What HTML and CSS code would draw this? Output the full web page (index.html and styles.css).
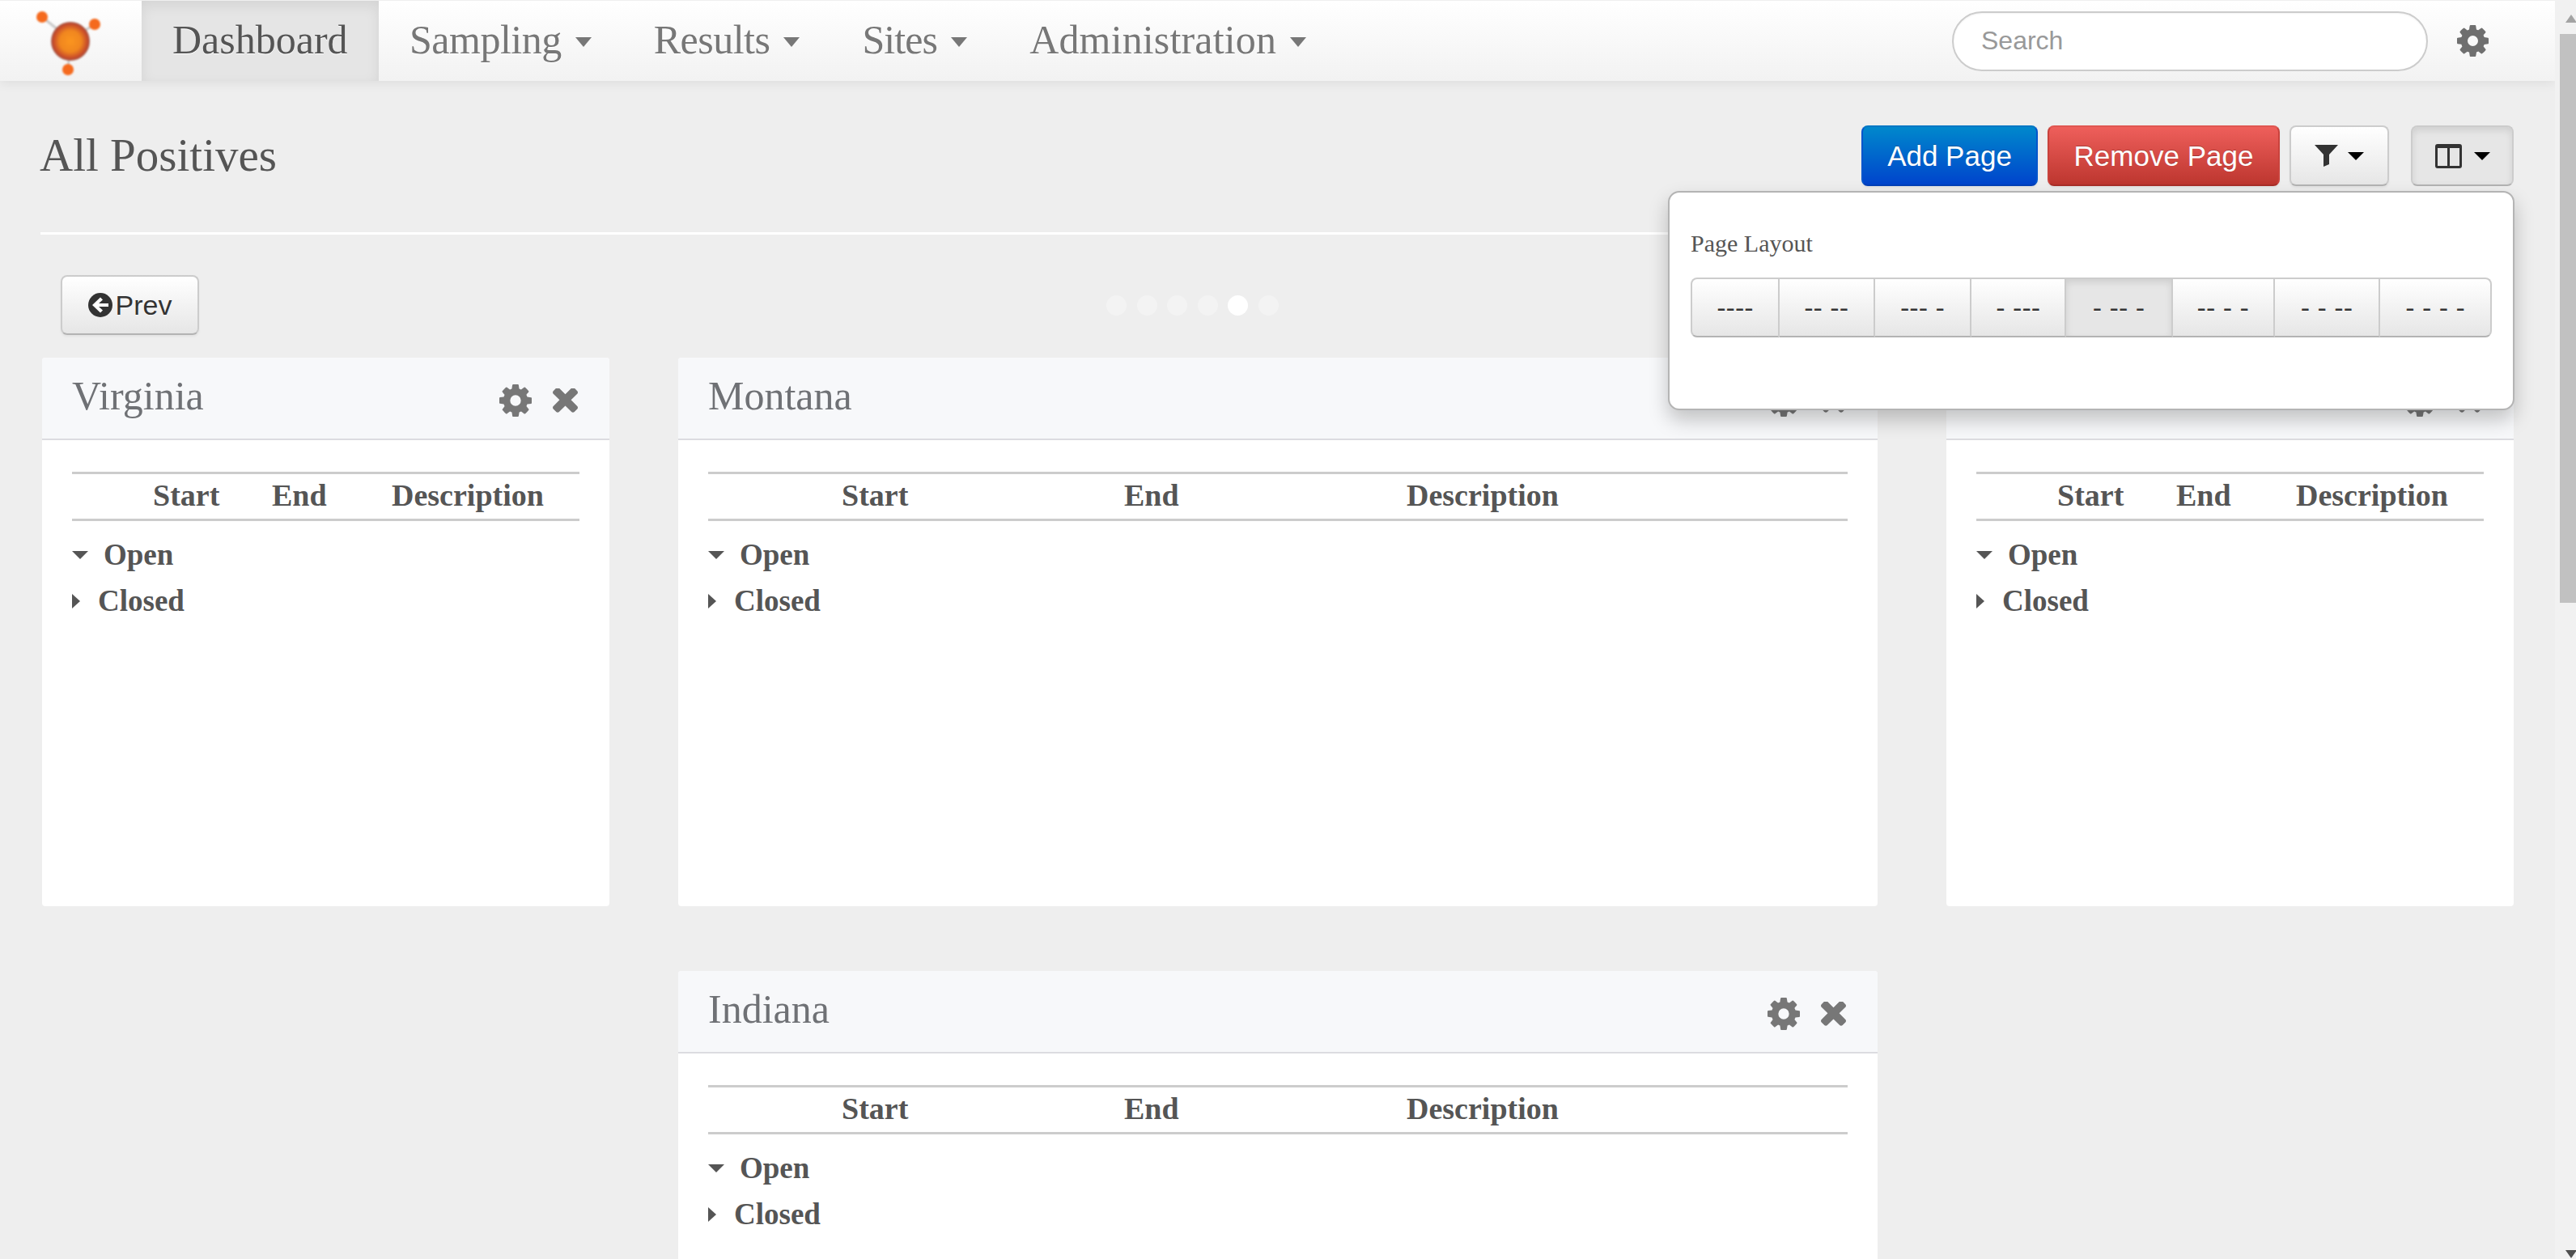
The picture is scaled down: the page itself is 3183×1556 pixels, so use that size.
FILE: index.html
```html
<!DOCTYPE html>
<html lang="en">
<head>
<meta charset="utf-8">
<title>All Positives</title>
<link rel="stylesheet" href="styles.css">
</head>
<body>
<svg class="defs" width="0" height="0" aria-hidden="true">
  <symbol id="gear" viewBox="0 0 1536 1536"><path d="M1024 768q0-106-75-181t-181-75-181 75-75 181 75 181 181 75 181-75 75-181zm512-109v222q0 12-8 23t-20 13l-185 28q-19 54-39 91 35 50 107 138 10 12 10 25t-9 23q-27 37-99 108t-94 71q-12 0-26-9l-138-108q-44 23-91 38-16 136-29 186-7 28-36 28h-222q-14 0-24.5-8.5t-11.5-21.5l-28-184q-49-16-90-37l-141 107q-10 9-25 9-14 0-25-11-126-114-165-168-7-10-7-23 0-12 8-23 15-21 51-66.5t54-70.5q-27-50-41-99l-183-27q-13-2-21-12.5t-8-23.5v-222q0-12 8-23t19-13l186-28q14-46 39-92-40-57-107-138-10-12-10-24 0-10 9-23 26-36 98.5-107.5t94.5-71.5q13 0 26 10l138 107q44-23 91-38 16-136 29-186 7-28 36-28h222q14 0 24.5 8.5t11.5 21.5l28 184q49 16 90 37l142-107q9-9 24-9 13 0 25 10 129 119 165 170 7 8 7 22 0 12-8 23-15 21-51 66.5t-54 70.5q26 50 41 98l183 28q13 2 21 12.5t8 23.5z"/></symbol>
  <symbol id="times" viewBox="110 346 1188 1100"><path d="M1298 1214q0 40-28 68l-136 136q-28 28-68 28t-68-28l-294-294-294 294q-28 28-68 28t-68-28l-136-136q-28-28-28-68t28-68l294-294-294-294q-28-28-28-68t28-68l136-136q28-28 68-28t68 28l294 294 294-294q28-28 68-28t68 28l136 136q28 28 28 68t-28 68l-294 294 294 294q28 28 28 68z"/></symbol>
</svg>
<div class="shell">
  <div class="app">
    <nav class="nav">
      <a class="brand" aria-label="Home">
        <svg width="175" height="98" viewBox="0 0 175 98">
          <defs>
            <radialGradient id="orb"><stop offset="0" stop-color="#fb951f"/><stop offset="0.55" stop-color="#f0861f"/><stop offset="0.88" stop-color="#c6492a"/><stop offset="1" stop-color="#a05a4a"/></radialGradient>
          </defs>
          <path d="M52 20L87 48M117 29L87 48M84 85L87 48" stroke="#c9c9c9" stroke-width="3"/>
          <circle cx="87" cy="50" r="24" fill="url(#orb)"/>
          <circle cx="52" cy="20" r="7" fill="#f56a1e"/>
          <circle cx="117" cy="29" r="7" fill="#f56a1e"/>
          <circle cx="84" cy="85" r="7" fill="#f56a1e"/>
        </svg>
      </a>
      <a class="nav-item is-active">Dashboard</a>
      <a class="nav-item ls-sampling">Sampling<i class="nav-caret"></i></a>
      <a class="nav-item ls-results">Results<i class="nav-caret"></i></a>
      <a class="nav-item ls-sites">Sites<i class="nav-caret"></i></a>
      <a class="nav-item ls-admin">Administration<i class="nav-caret"></i></a>
      <div class="nav-right">
        <input class="search" type="text" placeholder="Search">
        <svg class="nav-gear"><use href="#gear"/></svg>
      </div>
    </nav>

    <main class="content">
      <header class="toolbar">
        <h1 class="page-title">All Positives</h1>
        <div class="actions">
          <button class="btn btn-blue">Add Page</button>
          <button class="btn btn-red">Remove Page</button>
          <button class="btn btn-icon">
            <svg class="ico-filter" viewBox="0 0 29 27"><path d="M0 0H29L18 12V24L11 27V12Z"/></svg>
            <i class="caret"></i>
          </button>
          <button class="btn btn-icon btn-layout is-pressed">
            <svg class="ico-cols" viewBox="0 0 33 30"><path fill-rule="evenodd" d="M3 0H30A3 3 0 0 1 33 3V27A3 3 0 0 1 30 30H3A3 3 0 0 1 0 27V3A3 3 0 0 1 3 0ZM3 5V27H15V5ZM18 5V27H30V5Z"/></svg>
            <i class="caret"></i>
          </button>
          <section class="popover">
            <h2 class="popover-title">Page Layout</h2>
            <div class="btn-group">
              <button class="seg seg-a">----</button>
              <button class="seg seg-b">-- --</button>
              <button class="seg seg-c">--- -</button>
              <button class="seg seg-d">- ---</button>
              <button class="seg seg-e is-pressed">- -- -</button>
              <button class="seg seg-f">-- - -</button>
              <button class="seg seg-g">- - --</button>
              <button class="seg seg-h">- - - -</button>
            </div>
          </section>
        </div>
      </header>
      <hr class="rule">
      <div class="pager">
        <button class="btn btn-prev">
          <svg class="ico-prev" viewBox="0 0 30 30"><circle cx="15" cy="15" r="15"/><path class="ico-prev-arrow" d="M5 15L15 5.500L18 8.500L13 13H25V17H13L18 21.500L15 24.500Z"/></svg>Prev
        </button>
        <div class="dots">
          <span class="dot"></span><span class="dot"></span><span class="dot"></span><span class="dot"></span><span class="dot is-current"></span><span class="dot"></span>
        </div>
      </div>

      <div class="board">
        <article class="panel narrow">
          <div class="panel-head"><h3 class="panel-title">Virginia</h3><span class="tools"><svg class="tool-gear"><use href="#gear"/></svg><svg class="tool-x"><use href="#times"/></svg></span></div>
          <div class="panel-body">
            <div class="cols"><span></span><span>Start</span><span>End</span><span>Description</span></div>
            <div class="group"><i class="tri-down"></i>Open</div>
            <div class="group"><i class="tri-right"></i>Closed</div>
          </div>
        </article>
        <article class="panel wide">
          <div class="panel-head"><h3 class="panel-title">Montana</h3><span class="tools"><svg class="tool-gear"><use href="#gear"/></svg><svg class="tool-x"><use href="#times"/></svg></span></div>
          <div class="panel-body">
            <div class="cols"><span></span><span>Start</span><span>End</span><span>Description</span></div>
            <div class="group"><i class="tri-down"></i>Open</div>
            <div class="group"><i class="tri-right"></i>Closed</div>
          </div>
        </article>
        <article class="panel narrow">
          <div class="panel-head"><h3 class="panel-title"></h3><span class="tools"><svg class="tool-gear"><use href="#gear"/></svg><svg class="tool-x"><use href="#times"/></svg></span></div>
          <div class="panel-body">
            <div class="cols"><span></span><span>Start</span><span>End</span><span>Description</span></div>
            <div class="group"><i class="tri-down"></i>Open</div>
            <div class="group"><i class="tri-right"></i>Closed</div>
          </div>
        </article>
        <article class="panel wide second-row">
          <div class="panel-head"><h3 class="panel-title">Indiana</h3><span class="tools"><svg class="tool-gear"><use href="#gear"/></svg><svg class="tool-x"><use href="#times"/></svg></span></div>
          <div class="panel-body">
            <div class="cols"><span></span><span>Start</span><span>End</span><span>Description</span></div>
            <div class="group"><i class="tri-down"></i>Open</div>
            <div class="group"><i class="tri-right"></i>Closed</div>
          </div>
        </article>
      </div>
    </main>
  </div>
  <div class="scrollbar">
    <i class="sb-up"></i>
    <div class="sb-thumb"></div>
    <i class="sb-down"></i>
  </div>
</div>
</body>
</html>
```
FILE: styles.css
```css
* { box-sizing: border-box; }
html, body { margin: 0; height: 1556px; overflow: hidden; }
body {
  background: #eeeeee;
  color: #555;
  font-family: "Liberation Serif", serif;
}
.defs { position: absolute; }
.shell { display: flex; height: 1556px; overflow: hidden; }
.app { width: 3157px; flex: none; }

/* nav */
.nav {
  display: flex;
  align-items: stretch;
  height: 100px;
  background: linear-gradient(#ffffff, #f2f2f2);
  border-top: 1px solid #efefef;
  box-shadow: 0 2px 14px rgba(0, 0, 0, .08);
  position: relative;
}
.brand { width: 175px; flex: none; display: block; }
.brand svg { display: block; filter: blur(.8px); }
.nav-item {
  display: flex;
  align-items: center;
  padding: 0 39px 3px 38px;
  font-size: 50px;
  color: #777;
  text-shadow: 0 1px 0 #fff;
}
.ls-sampling { letter-spacing: -.5px; }
.ls-results { letter-spacing: -.5px; }
.ls-sites { letter-spacing: -.9px; }
.ls-admin { letter-spacing: .15px; }
.nav-item.is-active {
  width: 293px;
  color: #555;
  background: #e5e5e5;
  box-shadow: inset 0 6px 16px rgba(0, 0, 0, .08);
}
.nav-caret {
  width: 0;
  height: 0;
  margin: 6px 0 0 17px;
  border-left: 10px solid transparent;
  border-right: 10px solid transparent;
  border-top: 12px solid #777;
}
.nav-right { margin-left: auto; display: flex; align-items: center; padding-right: 82px; }
.search {
  width: 588px;
  height: 74px;
  padding: 0 34px;
  border: 2px solid #ccc;
  border-radius: 37px;
  background: #fff;
  font: 32px "Liberation Sans", sans-serif;
  box-shadow: inset 0 1px 2px rgba(0, 0, 0, .05);
  outline: none;
}
.search::placeholder { color: #999; opacity: 1; }
.nav-gear { width: 39px; height: 39px; margin-left: 36px; fill: #6f6f6f; }

/* content */
.content { padding: 55px 51px 0 50px; }
.toolbar { display: flex; justify-content: space-between; align-items: center; height: 75px; }
.page-title { margin: 0 0 2px -1px; font-size: 57px; font-weight: normal; color: #555; line-height: 73px; }
.actions { display: flex; position: relative; height: 75px; }

.btn {
  height: 75px;
  border: 2px solid #ccc;
  border-bottom-color: #b3b3b3;
  border-radius: 8px;
  background: linear-gradient(#ffffff, #e6e6e6);
  color: #333;
  font: 35px "Liberation Sans", sans-serif;
  text-shadow: 0 1px 1px rgba(255, 255, 255, .75);
  box-shadow: 0 2px 3px rgba(0, 0, 0, .05);
  padding: 0;
  display: flex;
  align-items: center;
  justify-content: center;
}
.btn-blue {
  width: 218px;
  margin-right: 12px;
  color: #fff;
  background: linear-gradient(#0088cc, #0044cc);
  border-color: #0077c4 #0055cc #0040b8;
  text-shadow: 0 -1px 0 rgba(0, 0, 0, .25);
}
.btn-red {
  width: 287px;
  margin-right: 12px;
  color: #fff;
  background: linear-gradient(#ee5f5b, #bd362f);
  border-color: #e05651 #c9423c #a92f29;
  text-shadow: 0 -1px 0 rgba(0, 0, 0, .25);
}
.btn-icon { width: 123px; gap: 12px; }
.btn-layout { width: 127px; margin-left: 27px; gap: 15px; }
.is-pressed {
  background: #e6e6e6;
  box-shadow: inset 0 4px 8px rgba(0, 0, 0, .1);
}
.ico-filter { width: 29px; height: 27px; fill: #333; }
.ico-cols { width: 33px; height: 30px; fill: #333; }
.caret {
  width: 0;
  height: 0;
  border-left: 10px solid transparent;
  border-right: 10px solid transparent;
  border-top: 10px solid #000;
}

/* popover */
.popover {
  position: absolute;
  top: 81px;
  right: -1px;
  width: 1046px;
  height: 271px;
  padding: 0 26px;
  background: #fff;
  border: 2px solid #b4b4b4;
  border-radius: 14px;
  box-shadow: 0 12px 24px rgba(0, 0, 0, .22);
  z-index: 5;
}
.popover-title {
  margin: 43px 0 22px;
  font-size: 30px;
  line-height: 40px;
  font-weight: normal;
  color: #555;
}
.btn-group { display: flex; height: 74px; }
.seg {
  height: 74px;
  padding: 0;
  border: 2px solid #ccc;
  border-left-width: 0;
  border-bottom-color: #b3b3b3;
  background: linear-gradient(#ffffff, #e6e6e6);
  color: #333;
  font: 34px "Liberation Sans", sans-serif;
  text-shadow: 0 1px 1px rgba(255, 255, 255, .75);
}
.seg.is-pressed { background: #e6e6e6; box-shadow: inset 0 4px 8px rgba(0, 0, 0, .1); }
.seg-a { width: 110px; border-left-width: 2px; border-radius: 8px 0 0 8px; }
.seg-b { width: 118px; }
.seg-c { width: 120px; }
.seg-d { width: 117px; }
.seg-e { width: 132px; }
.seg-f { width: 126px; }
.seg-g { width: 131px; }
.seg-h { width: 138px; border-radius: 0 8px 8px 0; }

.rule { margin: 57px 0 50px; height: 3px; border: 0; background: #fff; }

/* pager */
.pager { display: flex; align-items: center; height: 74px; margin: 0 0 28px 25px; }
.btn-prev { width: 171px; height: 74px; gap: 4px; font-size: 34px; }
.ico-prev { width: 30px; height: 30px; fill: #333; }
.ico-prev-arrow { fill: #fff; }
.dots { display: flex; gap: 12.5px; margin-left: 1121px; margin-top: 1px; }
.dot { width: 25px; height: 25px; border-radius: 50%; background: #f3f3f3; }
.dot.is-current { background: #fff; }

/* panels */
.board {
  display: grid;
  grid-template-columns: 701px 1482px 701px;
  column-gap: 85px;
  row-gap: 80px;
  margin-left: 2px;
}
.second-row { grid-column: 2; }
.panel { height: 678px; background: #fff; border-radius: 4px; overflow: hidden; }
.panel-head {
  display: flex;
  justify-content: space-between;
  align-items: center;
  height: 102px;
  padding: 0 39px 0 37px;
  background: #f7f8fa;
  border-bottom: 2px solid #dcdce0;
}
.panel-title { margin: 0 0 6px; font-size: 50px; font-weight: normal; color: #6f7175; line-height: 60px; }
.tools { display: flex; align-items: center; gap: 26px; margin-top: 6px; }
.tool-gear { width: 40px; height: 40px; fill: #777; }
.tool-x { width: 31px; height: 31px; fill: #777; }
.panel-body { padding: 39px 37px 0; }
.cols {
  display: grid;
  height: 61px;
  align-items: center;
  padding-bottom: 4px;
  border-top: 3px solid #ccc;
  border-bottom: 3px solid #ccc;
  font-size: 38px;
  font-weight: bold;
  color: #555;
}
.narrow .cols { grid-template-columns: 100px 147px 148px 1fr; }
.wide .cols { grid-template-columns: 165px 349px 349px 1fr; }
.group {
  display: flex;
  align-items: center;
  height: 57px;
  font-size: 37px;
  font-weight: bold;
  color: #555;
  position: relative;
  top: -2px;
}
.group:nth-of-type(2) { margin-top: 15px; }
.tri-down {
  width: 0;
  height: 0;
  margin: 0 19px 0 0;
  border-left: 10px solid transparent;
  border-right: 10px solid transparent;
  border-top: 10px solid #555;
}
.tri-right {
  width: 0;
  height: 0;
  margin: 0 22px 0 0;
  border-top: 9px solid transparent;
  border-bottom: 9px solid transparent;
  border-left: 10px solid #555;
}

/* scrollbar */
.scrollbar { flex: 1; position: relative; background: #f1f1f1; overflow: hidden; }
.sb-thumb { position: absolute; left: 6px; top: 42px; width: 28px; height: 703px; background: #c1c1c1; }
.sb-up, .sb-down { position: absolute; left: 13px; width: 0; height: 0; border-left: 7px solid transparent; border-right: 7px solid transparent; }
.sb-up { top: 18px; border-bottom: 10px solid #a3a3a3; }
.sb-down { bottom: 1px; border-top: 10px solid #505050; }
```
